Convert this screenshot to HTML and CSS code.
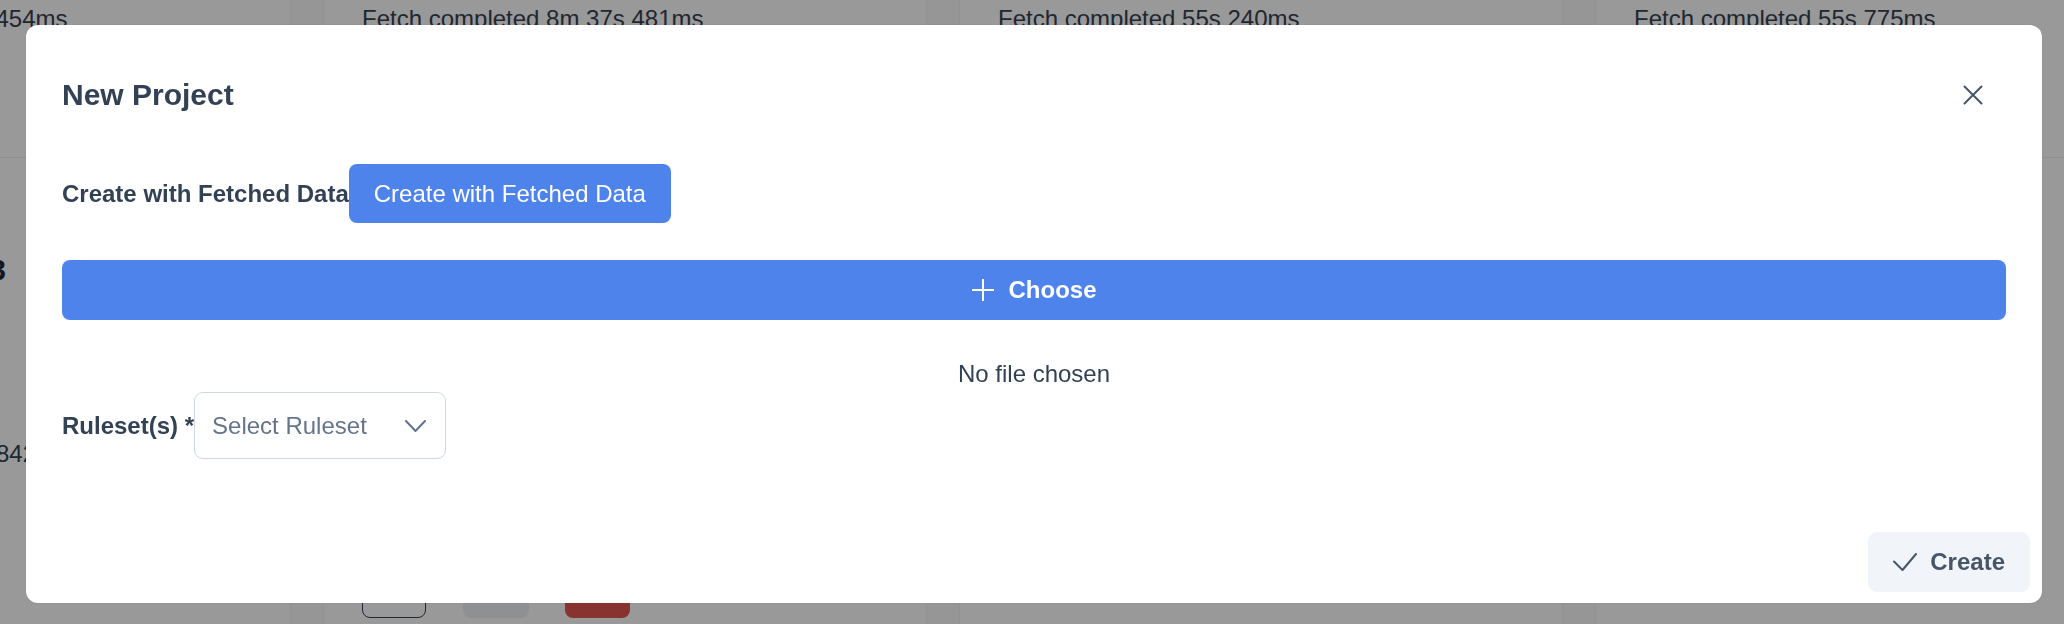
FILE: index.html
```html
<!DOCTYPE html>
<html lang="en">
<head>
<meta charset="utf-8">
<title>New Project</title>
<link rel="stylesheet" href="styles.css">
</head>
<body>
<div class="page">
  <div class="row row-top">
    <div class="cell"><span class="fetch">Fetch completed 8m 12s 454ms</span></div>
    <div class="band"></div>
    <div class="cell"><span class="fetch">Fetch completed 8m 37s 481ms</span></div>
    <div class="band"></div>
    <div class="cell"><span class="fetch">Fetch completed 55s 240ms</span></div>
    <div class="band"></div>
    <div class="cell"><span class="fetch">Fetch completed 55s 775ms</span></div>
  </div>
  <div class="row row-main">
    <div class="cell">
      <div class="big-num">13</div>
      <div class="mid-num">842</div>
    </div>
    <div class="band"></div>
    <div class="cell">
      <div class="actions">
        <span class="act act-outline">
          <svg width="20" height="20" viewBox="0 0 20 20"><path d="M10 2v14M5 11l5 5 5-5" fill="none" stroke="#1e293b" stroke-width="2" stroke-linecap="round"/></svg>
        </span>
        <span class="act act-gray">
          <svg width="20" height="20" viewBox="0 0 20 20"><path d="M4 4l12 12" fill="none" stroke="#1e293b" stroke-width="2" stroke-linecap="round"/></svg>
        </span>
        <span class="act act-red">
          <svg width="20" height="20" viewBox="0 0 20 20"><rect x="5" y="6" width="10" height="12" rx="1.5" fill="none" stroke="#f3c9c7" stroke-width="2"/></svg>
        </span>
      </div>
    </div>
    <div class="band"></div>
    <div class="cell"></div>
    <div class="band"></div>
    <div class="cell"></div>
  </div>
</div>

<div class="overlay">
  <div class="dialog" role="dialog" aria-label="New Project">
    <div class="dlg-header">
      <h2 class="dlg-title">New Project</h2>
      <button class="close-btn" type="button" aria-label="Close">
        <svg width="20" height="20" viewBox="0 0 20 20"><path d="M1.5 1.5l17 17M18.5 1.5l-17 17" fill="none" stroke="#475569" stroke-width="2" stroke-linecap="round"/></svg>
      </button>
    </div>
    <div class="dlg-body">
      <div class="fetch-row">
        <span class="field-label">Create with Fetched Data</span>
        <button class="btn-primary" type="button">Create with Fetched Data</button>
      </div>
      <div class="choose-bar">
        <svg width="24" height="24" viewBox="0 0 24 24"><path d="M12 1v22M1 12h22" fill="none" stroke="#ffffff" stroke-width="2"/></svg>
        <span>Choose</span>
      </div>
      <div class="file-name">No file chosen</div>
      <div class="ruleset-row">
        <span class="field-label">Ruleset(s) *</span>
        <div class="select">
          <span class="select-text">Select Ruleset</span>
          <svg width="21" height="12" viewBox="0 0 21 12"><path d="M1 1l9.5 10L20 1" fill="none" stroke="#64748b" stroke-width="2" stroke-linecap="round" stroke-linejoin="round"/></svg>
        </div>
      </div>
    </div>
    <div class="dlg-footer">
      <button class="btn-create" type="button">
        <svg width="24" height="18" viewBox="0 0 24 18"><path d="M1 8.5l8.5 8.5L23 1" fill="none" stroke="#475569" stroke-width="2" stroke-linecap="round" stroke-linejoin="round"/></svg>
        <span>Create</span>
      </button>
    </div>
  </div>
</div>
</body>
</html>
```

FILE: styles.css
```css
html, body {
  margin: 0;
  padding: 0;
}

body {
  font-family: "Liberation Sans", Arial, Helvetica, sans-serif;
  background: #ffffff;
  color: #374151;
}

/* ---------- background page ---------- */
.page {
  width: 2064px;
  height: 624px;
  overflow: hidden;
  background: #ffffff;
}

.row {
  display: flex;
  margin-left: -312px;
}

.row-top {
  height: 157px;
  border-bottom: 1px solid #eceef1;
}

.row-main {
  height: 466px;
}

.cell {
  width: 602px;
  flex: none;
  padding: 0 38px;
  box-sizing: border-box;
}

.band {
  width: 34px;
  flex: none;
  background: #fbfbfc;
  border-left: 1px solid #f1f2f4;
  border-right: 1px solid #f1f2f4;
  box-sizing: border-box;
}

.fetch {
  display: block;
  padding-top: 1px;
  font-size: 24px;
  line-height: 36px;
  white-space: nowrap;
  color: #374151;
}

.big-num {
  width: 280px;
  margin-top: 94px;
  text-align: right;
  font-size: 30px;
  line-height: 36px;
  font-weight: 700;
  color: #1f2937;
}

.mid-num {
  margin-top: 148px;
  margin-left: 270px;
  font-size: 24px;
  line-height: 36px;
  color: #374151;
}

.actions {
  display: flex;
  margin-top: 410px;
}

.act {
  height: 50px;
  border-radius: 8px;
  box-sizing: border-box;
  display: flex;
  align-items: center;
  justify-content: center;
}

.act-outline {
  width: 64px;
  border: 1.5px solid #334155;
}

.act-gray {
  width: 66px;
  margin-left: 37px;
  background: #eef0f4;
}

.act-red {
  width: 65px;
  margin-left: 36px;
  background: #e1554f;
}

/* ---------- overlay & dialog ---------- */
.overlay {
  position: fixed;
  inset: 0;
  background: rgba(0, 0, 0, 0.4);
  display: flex;
  align-items: flex-start;
  padding: 25px 0 0 26px;
  box-sizing: border-box;
}

.dialog {
  width: 2016px;
  height: 578px;
  background: #ffffff;
  border-radius: 12px;
  display: flex;
  flex-direction: column;
  color: #334155;
  box-shadow: 0 0 2px rgba(0, 0, 0, 0.12);
}

.dlg-header {
  height: 139px;
  flex: none;
  box-sizing: border-box;
  padding: 0 45px 0 36px;
  display: flex;
  align-items: center;
  justify-content: space-between;
}

.dlg-title {
  margin: 0;
  font-size: 30px;
  line-height: 36px;
  font-weight: 700;
  color: #334155;
}

.close-btn {
  width: 48px;
  height: 48px;
  padding: 0;
  border: 0;
  background: transparent;
  display: flex;
  align-items: center;
  justify-content: center;
  cursor: pointer;
}

.dlg-body {
  flex: 1;
  padding: 0 36px;
  display: flex;
  flex-direction: column;
}

.fetch-row {
  display: flex;
  align-items: center;
  height: 59px;
}

.field-label {
  font-size: 24px;
  line-height: 36px;
  font-weight: 700;
  color: #334155;
  white-space: nowrap;
}

.btn-primary {
  height: 59px;
  padding: 0 25px;
  border: 0;
  border-radius: 8px;
  background: #4f83ec;
  color: #ffffff;
  font-family: "Liberation Sans", Arial, Helvetica, sans-serif;
  font-size: 24px;
  line-height: 36px;
  white-space: nowrap;
  cursor: pointer;
}

.choose-bar {
  margin-top: 37px;
  height: 60px;
  border-radius: 8px;
  background: #4f83ec;
  color: #ffffff;
  display: flex;
  align-items: center;
  justify-content: center;
  gap: 13px;
  font-size: 24px;
  line-height: 36px;
  font-weight: 700;
}

.file-name {
  margin-top: 36px;
  text-align: center;
  font-size: 24px;
  line-height: 36px;
  color: #334155;
}

.ruleset-row {
  display: flex;
  align-items: center;
}

.select {
  width: 252px;
  height: 67px;
  box-sizing: border-box;
  border: 1px solid #cfd8e3;
  border-radius: 9px;
  padding: 0 19px 0 17px;
  display: flex;
  align-items: center;
  justify-content: space-between;
}

.select-text {
  font-size: 24px;
  line-height: 36px;
  color: #64748b;
  white-space: nowrap;
}

.dlg-footer {
  height: 83px;
  flex: none;
  box-sizing: border-box;
  padding: 12px 12px 0 0;
  display: flex;
  justify-content: flex-end;
  align-items: flex-start;
}

.btn-create {
  height: 60px;
  padding: 0 25px;
  border: 0;
  border-radius: 9px;
  background: #f1f5f9;
  color: #475569;
  display: flex;
  align-items: center;
  gap: 13px;
  font-family: "Liberation Sans", Arial, Helvetica, sans-serif;
  font-size: 24px;
  line-height: 36px;
  font-weight: 700;
  cursor: pointer;
}
```
